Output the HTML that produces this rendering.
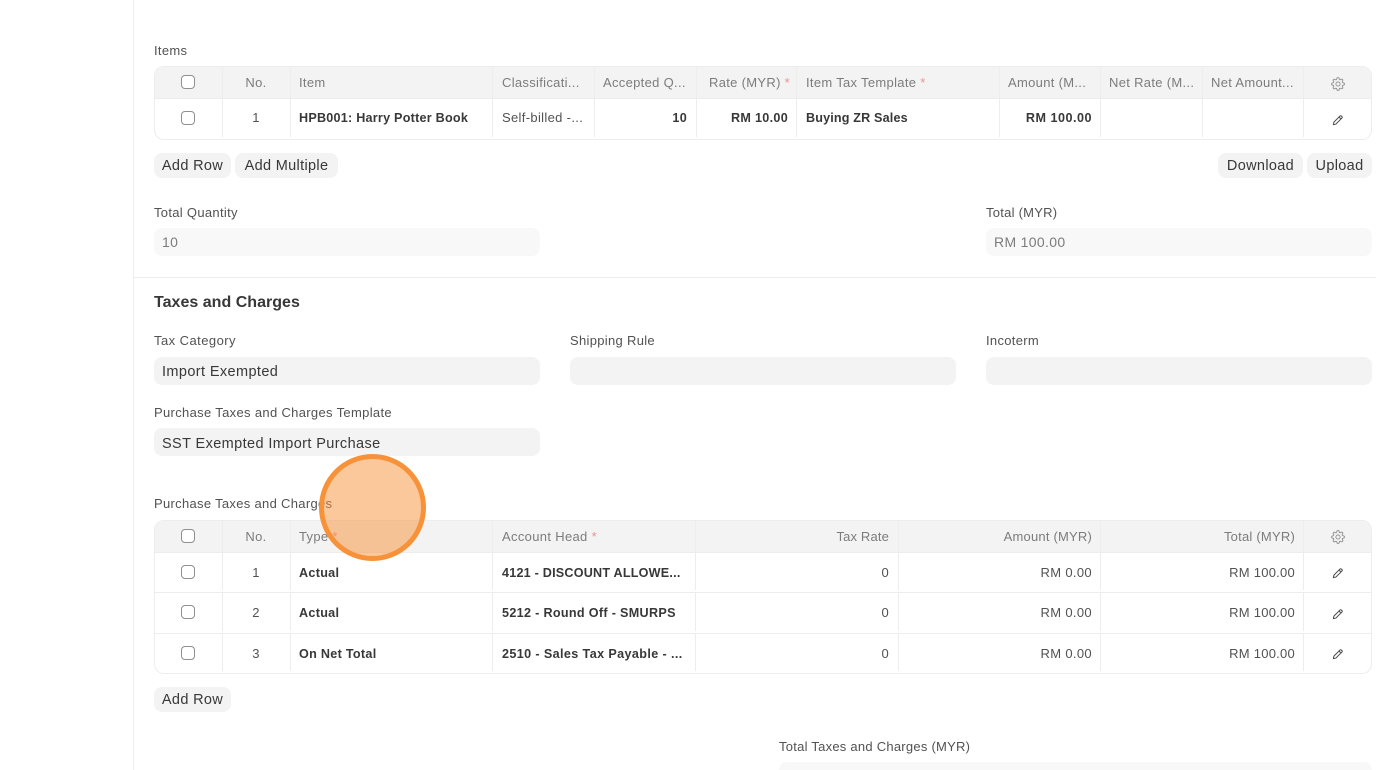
<!DOCTYPE html>
<html><head><meta charset="utf-8">
<style>
html,body{margin:0;padding:0;background:#fff;width:1376px;height:770px;overflow:hidden}
body{position:relative;font-family:"Liberation Sans",Arial,sans-serif;color:#383838}
.t{position:absolute;white-space:nowrap;line-height:16px;font-size:13px;letter-spacing:.33px}
.l{color:#525252;font-size:13px;letter-spacing:.31px}
.h{color:#7c7c7c;font-size:13px;letter-spacing:.31px}
.b{font-weight:bold;color:#383838;font-size:12.6px;letter-spacing:.3px}
.n{color:#525252;font-size:13px}
.r{text-align:right}
.c{text-align:center}
.box{position:absolute;border-radius:8px;background:#f3f3f3;height:28px}
.ro{background:#f8f8f8}
.v{position:absolute;white-space:nowrap;font-size:14.5px;line-height:30px;letter-spacing:.39px;color:#383838}
.vr{font-size:14px;line-height:28px;letter-spacing:.33px;color:#7c7c7c}
.btn{position:absolute;height:25px;top:0;background:#f3f3f3;border-radius:8px;font-size:14.5px;line-height:27px;text-align:center;letter-spacing:.33px;color:#383838}
.tb{position:absolute;left:154px;width:1216px;border:1px solid #ededed;border-radius:10px;overflow:hidden;box-sizing:content-box}
.hd{position:absolute;left:0;top:0;right:0;height:31px;background:#f3f3f3;border-bottom:1px solid #ededed}
.vl{position:absolute;width:1px;background:#ededed;top:0}
.hl{position:absolute;height:1px;background:#ededed;left:0;right:0}
.gap{position:absolute;height:2px;background:#fff;left:0;right:0}
.cb{position:absolute;width:12px;height:12px;border:1px solid #8f8f8f;border-radius:4px;background:#fff;left:181px}
svg{position:absolute;overflow:visible}
.red{color:#ef8f8f}
</style></head><body>
<svg width="0" height="0" style="left:0;top:0"><defs>
<g id="gear" fill="none" stroke="#8a8a8a" stroke-width="1.500"><circle cx="12" cy="12" r="3.600"/><path d="M19.400 15a1.650 1.650 0 0 0 .33 1.820l.06.06a2 2 0 0 1 0 2.830 2 2 0 0 1-2.830 0l-.06-.06a1.650 1.650 0 0 0-1.820-.33 1.650 1.650 0 0 0-1 1.510V21a2 2 0 0 1-2 2 2 2 0 0 1-2-2v-.09A1.650 1.650 0 0 0 9 19.400a1.650 1.650 0 0 0-1.820.33l-.06.06a2 2 0 0 1-2.830 0 2 2 0 0 1 0-2.830l.06-.06a1.650 1.650 0 0 0 .33-1.820 1.650 1.650 0 0 0-1.510-1H3a2 2 0 0 1-2-2 2 2 0 0 1 2-2h.09A1.650 1.650 0 0 0 4.600 9a1.650 1.650 0 0 0-.33-1.820l-.06-.06a2 2 0 0 1 0-2.830 2 2 0 0 1 2.830 0l.06.06a1.650 1.650 0 0 0 1.820.33H9a1.650 1.650 0 0 0 1-1.510V3a2 2 0 0 1 2-2 2 2 0 0 1 2 2v.09a1.650 1.650 0 0 0 1 1.510 1.650 1.650 0 0 0 1.820-.33l.06-.06a2 2 0 0 1 2.830 0 2 2 0 0 1 0 2.830l-.06.06a1.650 1.650 0 0 0-.33 1.820V9a1.650 1.650 0 0 0 1.510 1H21a2 2 0 0 1 2 2 2 2 0 0 1-2 2h-.09a1.650 1.650 0 0 0-1.510 1z"/></g>
<path id="pen" d="M1.400 10.600l.5-2.500 5.900-5.900c.5-.5 1.200-.5 1.600-.1l.5.500c.4.400.4 1.100-.1 1.600l-5.900 5.900zM7 3l2 2" fill="none" stroke="#484848" stroke-width="1"/>
</defs></svg>

<div style="position:absolute;left:133px;top:0;width:1px;height:770px;background:#ededed"></div>
<div style="position:absolute;left:134px;top:277px;width:1242px;height:1px;background:#ededed"></div>

<span class="t l" style="left:154px;top:43px">Items</span>

<div class="tb" style="top:66px;height:72px">
<div class="hd"></div>
<div class="vl" style="left:67px;height:72px"></div><div class="vl" style="left:135px;height:72px"></div><div class="vl" style="left:337px;height:72px"></div><div class="vl" style="left:439px;height:72px"></div><div class="vl" style="left:541px;height:72px"></div><div class="vl" style="left:641px;height:72px"></div><div class="vl" style="left:844px;height:72px"></div><div class="vl" style="left:945px;height:72px"></div><div class="vl" style="left:1047px;height:72px"></div><div class="vl" style="left:1148px;height:72px"></div>
<div class="gap" style="top:70px"></div>
</div>
<div class="cb" style="top:75px"></div><div class="cb" style="top:111px"></div>
<span class="t h c" style="left:222px;width:68px;top:75px">No.</span>
<span class="t h" style="left:299px;top:75px">Item</span>
<span class="t h" style="left:502px;top:75px">Classificati...</span>
<span class="t h" style="left:603px;top:75px">Accepted Q...</span>
<span class="t h" style="left:709px;top:75px">Rate (MYR) <span class="red">*</span></span>
<span class="t h" style="left:806px;top:75px">Item Tax Template <span class="red">*</span></span>
<span class="t h" style="left:1008px;top:75px">Amount (M...</span>
<span class="t h" style="left:1109px;top:75px">Net Rate (M...</span>
<span class="t h" style="left:1211px;top:75px">Net Amount...</span>
<svg style="left:1331px;top:77px" width="14" height="14" viewBox="0 0 24 24"><use href="#gear"/></svg>

<span class="t n c" style="left:222px;width:68px;top:110px">1</span>
<span class="t b" style="left:299px;top:110px;letter-spacing:.24px">HPB001: Harry Potter Book</span>
<span class="t n" style="left:502px;top:110px">Self-billed -...</span>
<span class="t b r" style="left:600px;width:87px;top:110px">10</span>
<span class="t b r" style="left:700px;width:88px;top:110px">RM 10.00</span>
<span class="t b" style="left:806px;top:110px;letter-spacing:.16px">Buying ZR Sales</span>
<span class="t b r" style="left:1000px;width:92px;top:110px;letter-spacing:.5px">RM 100.00</span>
<svg style="left:1332px;top:114px" width="12" height="12" viewBox="0 0 12 12"><use href="#pen"/></svg>

<div style="position:absolute;left:0;top:153px;width:1376px;height:25px">
<div class="btn" style="left:154px;width:77px">Add Row</div>
<div class="btn" style="left:235px;width:103px">Add Multiple</div>
<div class="btn" style="left:1218px;width:85px">Download</div>
<div class="btn" style="left:1307px;width:65px">Upload</div>
</div>

<span class="t l" style="left:154px;top:205px">Total Quantity</span>
<div class="box ro" style="left:154px;top:228px;width:386px"></div>
<span class="v vr" style="left:162px;top:228px">10</span>
<span class="t l" style="left:986px;top:205px;letter-spacing:.25px">Total (MYR)</span>
<div class="box ro" style="left:986px;top:228px;width:386px"></div>
<span class="v vr" style="left:994px;top:228px">RM 100.00</span>

<span class="t" style="left:154px;top:295px;font-size:16px;font-weight:bold;letter-spacing:.02px;color:#383838">Taxes and Charges</span>

<span class="t l" style="left:154px;top:333px;letter-spacing:.45px">Tax Category</span>
<div class="box" style="left:154px;top:357px;width:386px"></div>
<span class="v" style="left:162px;top:357px">Import Exempted</span>
<span class="t l" style="left:570px;top:333px">Shipping Rule</span>
<div class="box" style="left:570px;top:357px;width:386px"></div>
<span class="t l" style="left:986px;top:333px">Incoterm</span>
<div class="box" style="left:986px;top:357px;width:386px"></div>

<span class="t l" style="left:154px;top:405px;letter-spacing:.33px">Purchase Taxes and Charges Template</span>
<div class="box" style="left:154px;top:428px;width:386px"></div>
<span class="v" style="left:162px;top:429px">SST Exempted Import Purchase</span>

<span class="t l" style="left:154px;top:496px">Purchase Taxes and Charges</span>

<div class="tb" style="top:520px;height:152px">
<div class="hd"></div>
<div class="vl" style="left:67px;height:152px"></div><div class="vl" style="left:135px;height:152px"></div><div class="vl" style="left:337px;height:152px"></div><div class="vl" style="left:540px;height:152px"></div><div class="vl" style="left:743px;height:152px"></div><div class="vl" style="left:945px;height:152px"></div><div class="vl" style="left:1148px;height:152px"></div>
<div class="gap" style="top:69px"></div><div class="gap" style="top:110px"></div><div class="gap" style="top:150px"></div>
<div class="hl" style="top:71px"></div><div class="hl" style="top:112px"></div>
</div>
<div class="cb" style="top:529px"></div><div class="cb" style="top:565px"></div><div class="cb" style="top:605px"></div><div class="cb" style="top:646px"></div>
<span class="t h c" style="left:222px;width:68px;top:529px">No.</span>
<span class="t h" style="left:299px;top:529px">Type <span class="red">*</span></span>
<span class="t h" style="left:502px;top:529px;letter-spacing:.33px">Account Head <span class="red">*</span></span>
<span class="t h r" style="left:700px;width:189px;top:529px;letter-spacing:.15px">Tax Rate</span>
<span class="t h r" style="left:900px;width:192px;top:529px;letter-spacing:.2px">Amount (MYR)</span>
<span class="t h r" style="left:1105px;width:190px;top:529px;letter-spacing:.22px">Total (MYR)</span>
<svg style="left:1331px;top:530px" width="14" height="14" viewBox="0 0 24 24"><use href="#gear"/></svg>

<span class="t n c" style="left:222px;width:68px;top:565px">1</span>
<span class="t b" style="left:299px;top:565px">Actual</span>
<span class="t b" style="left:502px;top:565px;letter-spacing:.22px">4121 - DISCOUNT ALLOWE...</span>
<span class="t n r" style="left:700px;width:189px;top:565px">0</span>
<span class="t n r" style="left:900px;width:192px;top:565px">RM 0.00</span>
<span class="t n r" style="left:1105px;width:190px;top:565px;letter-spacing:.25px">RM 100.00</span>
<svg style="left:1332px;top:567px" width="12" height="12" viewBox="0 0 12 12"><use href="#pen"/></svg>

<span class="t n c" style="left:222px;width:68px;top:605px">2</span>
<span class="t b" style="left:299px;top:605px">Actual</span>
<span class="t b" style="left:502px;top:605px;letter-spacing:.32px">5212 - Round Off - SMURPS</span>
<span class="t n r" style="left:700px;width:189px;top:605px">0</span>
<span class="t n r" style="left:900px;width:192px;top:605px">RM 0.00</span>
<span class="t n r" style="left:1105px;width:190px;top:605px;letter-spacing:.25px">RM 100.00</span>
<svg style="left:1332px;top:608px" width="12" height="12" viewBox="0 0 12 12"><use href="#pen"/></svg>

<span class="t n c" style="left:222px;width:68px;top:646px">3</span>
<span class="t b" style="left:299px;top:646px">On Net Total</span>
<span class="t b" style="left:502px;top:646px;letter-spacing:.38px">2510 - Sales Tax Payable - ...</span>
<span class="t n r" style="left:700px;width:189px;top:646px">0</span>
<span class="t n r" style="left:900px;width:192px;top:646px">RM 0.00</span>
<span class="t n r" style="left:1105px;width:190px;top:646px;letter-spacing:.25px">RM 100.00</span>
<svg style="left:1332px;top:648px" width="12" height="12" viewBox="0 0 12 12"><use href="#pen"/></svg>

<div style="position:absolute;left:0;top:687px;width:400px;height:25px"><div class="btn" style="left:154px;width:77px">Add Row</div></div>

<span class="t l" style="left:779px;top:739px;letter-spacing:.25px">Total Taxes and Charges (MYR)</span>
<div class="box ro" style="left:779px;top:762px;width:593px"></div>

<div style="position:absolute;left:319px;top:454px;width:107px;height:107px;box-sizing:border-box;border:5px solid #f79239;border-radius:50%;background:rgba(247,146,57,.5)"></div>
</body></html>
